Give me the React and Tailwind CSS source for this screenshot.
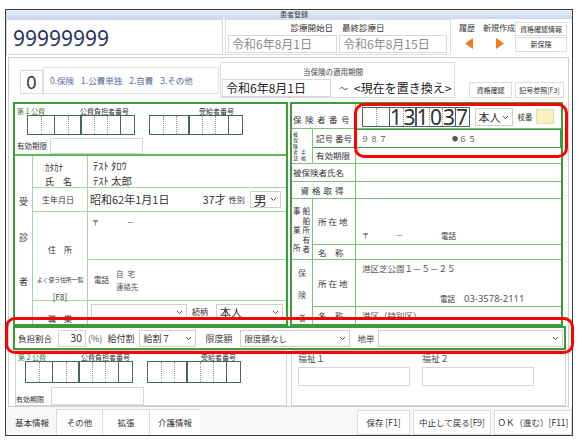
import React from "react";

const Chev = () => (
  <svg width="7" height="5" viewBox="0 0 7 5" className="shrink-0">
    <path d="M1 1l2.5 2.5L6 1" fill="none" stroke="#555" strokeWidth="1" />
  </svg>
);

function Select({ className = "", text = "", textClass = "" }) {
  return (
    <div
      className={`flex items-center justify-between border border-[#cfcfcf] bg-white pl-[3px] pr-[3px] ${className}`}
    >
      <span className={`whitespace-nowrap ${textClass}`}>{text}</span>
      <Chev />
    </div>
  );
}

function Digits({ groups, digits = [], tall = "h-[20px]", big = false }) {
  let i = 0;
  return (
    <div className="flex">
      {groups.map((n, g) => (
        <div
          key={g}
          className={`flex border-[1.5px] border-[#46665c] ${g > 0 ? "-ml-[1.5px]" : ""} ${tall}`}
        >
          {Array.from({ length: n }).map((_, k) => {
            const d = digits[i++] || "";
            return (
              <div
                key={k}
                className={`w-[13px] flex items-center justify-center ${
                  k > 0 ? "border-l border-dotted border-[#8a9a95]" : ""
                } ${big ? "text-[21px] text-[#333] font-['Noto_Sans',sans-serif]" : ""}`}
              >
                {d}
              </div>
            );
          })}
        </div>
      ))}
    </div>
  );
}

const Tri = ({ dir }) => (
  <svg width="8" height="11" viewBox="0 0 8 11">
    {dir === "l" ? (
      <path d="M8 0L0 5.5 8 11z" fill="#f07a22" />
    ) : (
      <path d="M0 0l8 5.5L0 11z" fill="#f07a22" />
    )}
  </svg>
);

export default function App() {
  return (
    <div className="w-[581px] h-[445px] bg-white relative overflow-hidden font-['Noto_Sans_CJK_JP','Noto_Sans',sans-serif] text-[#333] leading-none">
      <div className="ml-[5px] mt-[9px] w-[568px] h-[427px] border border-[#3c3c3c] bg-white flex flex-col">
        {/* title bar */}
        <div className="h-[9px] bg-gradient-to-b from-[#e6eef9] to-[#cbdaee] flex items-center justify-center text-[7px] text-[#444] pl-[10px]">
          患者登録
        </div>

        {/* header */}
        <div className="h-[37px] flex">
          <div className="w-[217px] h-[36px] border border-[#d6d6d6] bg-white flex items-center pl-[6px] pt-[3px] text-[21px] text-[#2c3565] font-['Noto_Sans',sans-serif]">
            99999999
          </div>
          <div className="ml-[2px] w-[226px] h-[36px] border border-[#dedede] bg-white flex flex-col px-[2px]">
            <div className="h-[15px] flex items-center text-[8.5px]">
              <div className="w-[109px] text-right pr-[4px]">診療開始日</div>
              <div className="ml-[2px] pl-[3px]">最終診療日</div>
            </div>
            <div className="flex gap-[2px]">
              <div className="w-[109px] h-[18px] border border-[#d8d8d8] flex items-center pl-[3px] text-[12px] text-[#8c8c8c]">
                令和6年8月1日
              </div>
              <div className="w-[108px] h-[18px] border border-[#d8d8d8] flex items-center pl-[3px] text-[12px] text-[#8c8c8c]">
                令和6年8月15日
              </div>
            </div>
          </div>
          <div className="w-[64px] flex flex-col">
            <div className="flex text-[8px] pl-[8px] pt-[5px] gap-[8px]">
              <span>履歴</span>
              <span>新規作成</span>
            </div>
            <div className="flex pl-[14px] pt-[6px] gap-[23px]">
              <Tri dir="l" />
              <Tri dir="r" />
            </div>
          </div>
          <div className="w-[52px] flex flex-col gap-[1px] pt-[3px]">
            <div className="h-[14px] border border-[#dcdcdc] bg-white flex items-center justify-center text-[7px]">
              資格確認情報
            </div>
            <div className="h-[15px] border border-[#dcdcdc] bg-white flex items-center justify-center text-[7px]">
              新保険
            </div>
          </div>
        </div>

        {/* main panel */}
        <div className="ml-[2px] mt-[1px] w-[561px] h-[350px] border border-[#cfcfcf] bg-white flex flex-col">
          {/* row 2 */}
          <div className="h-[44px] flex items-start">
            <div className="ml-[11px] mt-[12px] w-[23px] h-[24px] border border-[#dcdcdc] flex items-center justify-center text-[18px] font-['Noto_Sans',sans-serif]">
              0
            </div>
            <div className="mt-[9px] w-[176px] h-[27px] border border-[#e2e2e2] flex items-center pl-[6px] gap-[7px] text-[8.5px] text-[#5b6b95]">
              <span>0.保険</span>
              <span>1.公費単独</span>
              <span>2.自費</span>
              <span>3.その他</span>
            </div>
            <div className="ml-[1px] mt-[4px] w-[235px] h-[36px] border border-[#dcdcdc] flex flex-col">
              <div className="h-[16px] pl-[82px] pt-[5px] text-[7.5px] text-[#444]">当保険の適用期間</div>
              <div className="flex items-center">
                <div className="ml-[1px] w-[109px] h-[18px] border border-[#d8d8d8] flex items-center pl-[3px] text-[12px] text-[#222]">
                  令和6年8月1日
                </div>
                <span className="ml-[8px] text-[9px] text-[#555]">～</span>
                <span className="ml-[6px] text-[12px] text-[#222]">&lt;現在を置き換え&gt;</span>
              </div>
            </div>
            <div className="ml-[14px] mt-[24px] flex gap-[3px]">
              <div className="w-[43px] h-[16px] border border-[#dcdcdc] flex items-center justify-center text-[7px]">
                資格確認
              </div>
              <div className="w-[49px] h-[16px] border border-[#dcdcdc] flex items-center justify-center text-[7px]">
                記号参照[F3]
              </div>
            </div>
          </div>

          {/* form */}
          <div className="ml-[4px] h-[224px] flex">
            {/* left */}
            <div className="w-[275px] h-[224px] border-2 border-[#3c9c3c] flex flex-col">
              <div className="h-[52px] border-b-2 border-[#5cb85c] flex flex-col">
                <div className="h-[11px] flex items-end text-[7px]">
                  <span className="ml-[2px] w-[63px] text-[#3f7f4a]">第１公費</span>
                  <span className="w-[119px]">公費負担者番号</span>
                  <span>受給者番号</span>
                </div>
                <div className="flex ml-[12px]">
                  <Digits groups={[2, 2, 3, 1]} />
                  <div className="ml-[14px]">
                    <Digits groups={[3, 3, 1]} />
                  </div>
                </div>
                <div className="flex items-center mt-[3px]">
                  <span className="ml-[2px] w-[33px] text-[7.5px]">有効期限</span>
                  <div className="w-[93px] h-[16px] border border-[#d6d6d6]" />
                </div>
              </div>

              <div className="flex-1 grid grid-cols-[18px_55px_1fr] grid-rows-[32px_24px_48px_41px_1fr]">
                <div className="row-span-5 border-r border-[#a3d6a3] flex flex-col items-center text-[9px]">
                  <span className="mt-[41px]">受</span>
                  <span className="mt-[27px]">診</span>
                  <span className="mt-[35px]">者</span>
                </div>
                <div className="border-r border-b border-[#a3d6a3] flex flex-col pl-[12px] pt-[7px]">
                  <span className="text-[9px]">ｶﾀｶﾅ</span>
                  <span className="mt-[5px] text-[9px]">氏　名</span>
                </div>
                <div className="border-b border-[#a3d6a3] flex flex-col pl-[5px] pt-[5px] text-[10.5px]">
                  <span>ﾃｽﾄ ﾀﾛｳ</span>
                  <span className="mt-[4px]">ﾃｽﾄ 太郎</span>
                </div>
                <div className="border-r border-b border-[#a3d6a3] flex items-center pl-[9px] text-[8px]">生年月日</div>
                <div className="border-b border-[#a3d6a3] flex items-center pl-[2px]">
                  <span className="text-[11px]">昭和62年1月1日</span>
                  <span className="ml-[33px] text-[11px]">37才</span>
                  <span className="ml-[3px] text-[8px]">性別</span>
                  <Select className="ml-[5px] w-[31px] h-[17px]" text="男" textClass="text-[13px]" />
                </div>
                <div className="row-span-2 border-r border-b border-[#a3d6a3] flex flex-col items-center text-[8px]">
                  <span className="mt-[34px]">住　所</span>
                  <span className="mt-[23px] text-[6px] tracking-[-0.2px] whitespace-nowrap">よく使う住所一覧</span>
                  <span className="mt-[10px] text-[8px]">[F8]</span>
                </div>
                <div className="border-b border-[#a3d6a3] flex pl-[4px] pt-[7px] text-[7px]">
                  <span>〒</span>
                  <span className="ml-[28px]">－</span>
                </div>
                <div className="border-b border-[#a3d6a3] flex items-center pl-[6px]">
                  <span className="text-[7.5px]">電話</span>
                  <div className="ml-[7px] flex flex-col text-[7.5px] text-[#555]">
                    <span className="tracking-[4px]">自宅</span>
                    <span className="mt-[6px]">連絡先</span>
                  </div>
                </div>
                <div className="border-r border-[#a3d6a3] flex items-end justify-center pb-[1px] text-[8px]">
                  職　業
                </div>
                <div className="flex items-start pl-[3px] pt-[3px]">
                  <Select className="w-[96px] h-[16px]" />
                  <span className="ml-[5px] mt-[4px] text-[8px]">続柄</span>
                  <Select className="ml-[8px] w-[67px] h-[16px]" text="本人" textClass="text-[11px]" />
                </div>
              </div>
            </div>

            {/* right */}
            <div className="ml-[2px] w-[273px] h-[224px] border-2 border-[#3c9c3c] flex flex-col text-[8.5px]">
              <div className="h-[25px] flex border-b border-[#7cc47c]">
                <div className="w-[64px] border-r border-[#7cc47c] flex items-center pl-[1px] pt-[6px] tracking-[3.5px] whitespace-nowrap overflow-hidden">
                  保険者番号
                </div>
                <div className="flex items-start pl-[6px] pt-[3px]">
                  <Digits groups={[2, 2, 3, 1]} digits={["", "", "1", "3", "1", "0", "3", "7"]} big />
                  <Select className="ml-[5px] mt-[1px] w-[38px] h-[18px]" text="本人" textClass="text-[11px]" />
                  <span className="ml-[5px] mt-[6px] text-[7.5px] whitespace-nowrap">枝番</span>
                  <div className="ml-[3px] mt-[2px] w-[18px] h-[15px] bg-[#fbf1c0] border border-[#e0dcb0]" />
                </div>
              </div>

              <div className="h-[35px] flex border-b border-[#7cc47c]">
                <div className="w-[21px] border-r border-[#7cc47c] flex pl-[1px] pt-[2px] text-[5px] gap-[3px]">
                  <div className="flex flex-col gap-[1px]">
                    <span>被</span>
                    <span>保</span>
                    <span>険</span>
                    <span>者</span>
                    <span>証</span>
                  </div>
                  <div className="flex flex-col gap-[1px] mt-[18px]">
                    <span>手</span>
                    <span>帳</span>
                  </div>
                </div>
                <div className="flex-1 flex flex-col">
                  <div className="h-[19px] flex border-b border-[#3c9c3c]">
                    <div className="w-[43px] border-r border-[#7cc47c] flex items-center pl-[3px] text-[8.5px] whitespace-nowrap">
                      記号 番号
                    </div>
                    <div className="flex-1 border-x-[1.5px] border-t-[1.5px] border-[#3c9c3c] flex items-center pl-[4px] text-[8px] text-[#555]">
                      <span className="tracking-[1px]">９８７</span>
                      <span className="ml-[64px] text-[6px]">●</span>
                      <span className="ml-[1px] tracking-[1px]">６５</span>
                    </div>
                  </div>
                  <div className="flex-1 flex">
                    <div className="w-[43px] border-r border-[#7cc47c] flex items-center pl-[3px]">有効期限</div>
                  </div>
                </div>
              </div>

              <div className="h-[18px] flex border-b border-[#7cc47c]">
                <div className="w-[64px] border-r border-[#7cc47c] flex items-center pl-[1px] whitespace-nowrap">被保険者氏名</div>
              </div>
              <div className="h-[17px] flex border-b border-[#7cc47c]">
                <div className="w-[64px] border-r border-[#7cc47c] flex items-center justify-center tracking-[3px]">
                  資格取得
                </div>
              </div>

              <div className="h-[61px] flex border-b border-[#7cc47c]">
                <div className="w-[21px] border-r border-[#7cc47c] flex pl-[1px] pt-[8px] text-[7.5px] gap-[2px]">
                  <div className="flex flex-col gap-[11px]">
                    <span>事</span>
                    <span>業</span>
                    <span>所</span>
                  </div>
                  <div className="flex flex-col gap-[2px]">
                    <span>船</span>
                    <span>舶</span>
                    <span>所</span>
                    <span>有</span>
                    <span>者</span>
                  </div>
                </div>
                <div className="flex-1 flex flex-col">
                  <div className="h-[46px] flex border-b border-[#7cc47c]">
                    <div className="w-[43px] border-r border-[#7cc47c] flex items-center pl-[5px] tracking-[2px]">所在地</div>
                    <div className="flex items-end pb-[5px] pl-[6px] text-[7px]">
                      <span>〒</span>
                      <span className="ml-[27px]">－</span>
                      <span className="ml-[38px] text-[7.5px]">電話</span>
                    </div>
                  </div>
                  <div className="flex-1 flex">
                    <div className="w-[43px] border-r border-[#7cc47c] flex items-center pl-[5px]">名　称</div>
                  </div>
                </div>
              </div>

              <div className="flex-1 flex">
                <div className="w-[21px] border-r border-[#7cc47c] flex flex-col items-center text-[8px] text-[#555]">
                  <span className="mt-[9px]">保</span>
                  <span className="mt-[14px]">険</span>
                  <span className="mt-[15px]">者</span>
                </div>
                <div className="flex-1 flex flex-col">
                  <div className="h-[47px] flex border-b border-[#7cc47c]">
                    <div className="w-[43px] border-r border-[#7cc47c] flex items-center pl-[5px] tracking-[2px]">所在地</div>
                    <div className="flex-1 flex flex-col pl-[6px] pt-[4px] text-[#555]">
                      <span className="text-[8.5px]">港区芝公園１－５－２５</span>
                      <div className="mt-auto mb-[3px] ml-[78px] flex items-center">
                        <span className="text-[7.5px] text-[#333]">電話</span>
                        <span className="ml-[9px] text-[9.5px] font-['Noto_Sans',sans-serif]">03-3578-2111</span>
                      </div>
                    </div>
                  </div>
                  <div className="flex-1 flex">
                    <div className="w-[43px] border-r border-[#7cc47c] flex items-center pl-[5px]">名　称</div>
                    <div className="flex items-center pl-[6px] text-[#555]">港区（特別区）</div>
                  </div>
                </div>
              </div>
            </div>
          </div>

          {/* burden bar */}
          <div className="ml-[4px] w-[553px] h-[24px] border-2 border-[#3c9c3c] flex items-center text-[8.5px]">
            <span className="pl-[3px]">負担割合</span>
            <div className="ml-[6px] w-[28px] h-[17px] border border-[#d6d6d6] flex items-center justify-end pr-[3px] text-[10px] font-['Noto_Sans',sans-serif]">
              30
            </div>
            <span className="ml-[2px] text-[9px] text-[#555]">(%)</span>
            <span className="ml-[5px] text-[9px]">給付割</span>
            <Select className="ml-[5px] w-[57px] h-[17px]" text="給割７" textClass="text-[9px]" />
            <span className="ml-[9px] text-[9px] text-[#444]">限度額</span>
            <Select className="ml-[8px] w-[110px] h-[17px]" text="限度額なし" textClass="text-[8.5px]" />
            <span className="ml-[7px] text-[8.5px] text-[#444]">地単</span>
            <Select className="ml-[4px] mr-[1px] flex-1 h-[17px]" />
          </div>

          {/* bottom boxes */}
          <div className="flex h-[56px]">
            <div className="ml-[6px] w-[272px] border border-[#d4d4d4] flex flex-col">
              <div className="h-[10px] flex items-end text-[7px]">
                <span className="ml-[2px] w-[63px] text-[#3f7f4a]">第２公費</span>
                <span className="w-[120px]">公費負担者番号</span>
                <span>受給者番号</span>
              </div>
              <div className="flex ml-[9px]">
                <Digits groups={[2, 2, 3, 1]} tall="h-[22px]" />
                <div className="ml-[14px]">
                  <Digits groups={[3, 3, 1]} tall="h-[22px]" />
                </div>
              </div>
              <div className="flex items-end mt-[4px]">
                <span className="w-[35px] text-[7px] pb-[2px]">有効期限</span>
                <div className="w-[93px] h-[18px] border border-[#d6d6d6]" />
              </div>
            </div>
            <div className="ml-[4px] w-[275px] border border-[#d4d4d4] flex pt-[3px] text-[9px] text-[#555]">
              <div className="ml-[6px] flex flex-col">
                <span>福祉１</span>
                <div className="mt-[4px] w-[112px] h-[19px] border border-[#d6d6d6]" />
              </div>
              <div className="ml-[12px] flex flex-col">
                <span>福祉２</span>
                <div className="mt-[4px] w-[112px] h-[19px] border border-[#d6d6d6]" />
              </div>
            </div>
          </div>
        </div>

        {/* tabs + buttons */}
        <div className="flex-1 flex items-end bg-[#f7f7f7] text-[8.5px]">
          <div className="w-[50px] h-[26px] flex items-center pl-[9px]">基本情報</div>
          <div className="w-[47px] h-[26px] bg-white border-x border-t border-[#dcdcdc] flex items-center justify-center">その他</div>
          <div className="w-[47px] h-[26px] bg-white border-r border-t border-[#dcdcdc] flex items-center justify-center">拡張</div>
          <div className="w-[50px] h-[26px] bg-white border-t border-[#dcdcdc] flex items-center justify-center">介護情報</div>
          <div className="ml-auto flex gap-[3px]">
            <div className="w-[53px] h-[25px] bg-white border border-[#dcdcdc] flex items-center justify-center">保存 [F1]</div>
            <div className="w-[78px] h-[25px] bg-white border border-[#dcdcdc] flex items-center justify-center">中止して戻る[F9]</div>
            <div className="w-[78px] h-[25px] bg-white border border-[#dcdcdc] flex items-center justify-center">ＯＫ（進む）[F11]</div>
          </div>
        </div>
      </div>

      {/* red annotation frames */}
      <div className="absolute left-[354px] top-[103px] w-[214px] h-[55px] border-[3px] border-[#ff0000] rounded-[10px]" />
      <div className="absolute left-[5px] top-[317px] w-[569px] h-[37px] border-[3px] border-[#ff0000] rounded-[10px]" />
    </div>
  );
}
